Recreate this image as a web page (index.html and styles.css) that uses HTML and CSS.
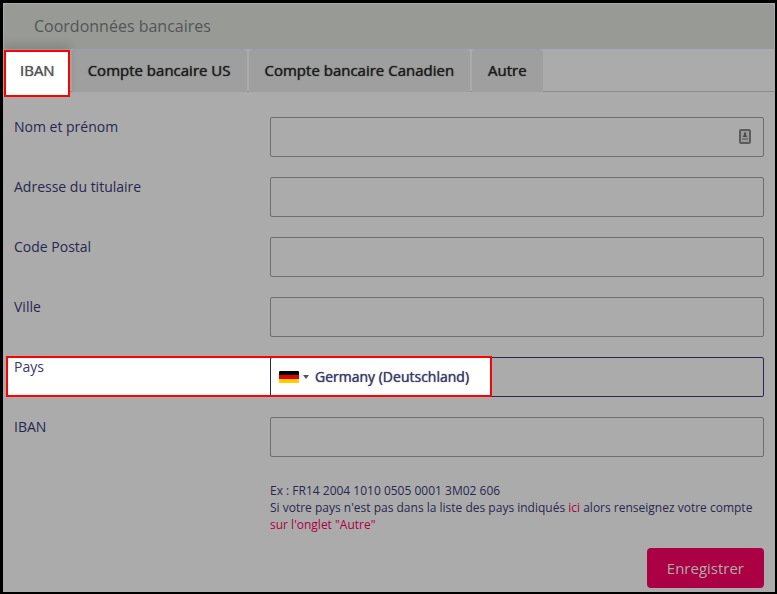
FILE: index.html
```
<!DOCTYPE html>
<html lang="fr">
<head>
  <meta charset="UTF-8" />
  <meta name="viewport" content="width=device-width, initial-scale=1" />
  <title>Coordonnées bancaires</title>
  <link rel="stylesheet" href="styles.css">
</head>
<body>
  <main class="panel">
    <h1 class="panel-title">Coordonnées bancaires</h1>

    <nav class="tabs" role="tablist">
      <button type="button" class="tab active" role="tab" aria-selected="true">IBAN</button>
      <button type="button" class="tab" role="tab" aria-selected="false">Compte bancaire US</button>
      <button type="button" class="tab" role="tab" aria-selected="false">Compte bancaire Canadien</button>
      <button type="button" class="tab" role="tab" aria-selected="false">Autre</button>
    </nav>

    <form class="bank-form">
      <div class="row">
        <label for="name">Nom et prénom</label>
        <div class="field">
          <input type="text" id="name" />
          <svg class="contact-icon" viewBox="0 0 12 16" aria-hidden="true">
            <rect x="1" y="1" width="10" height="13" rx="1" fill="#999" stroke="#5c5c5c" stroke-width="2" />
            <path d="M6 3 L7 4 V6 L8 7 V8 H4 V7 L5 6 V4 Z" fill="#4c4c4c" />
            <rect x="3" y="9" width="6" height="2" fill="#777" />
          </svg>
        </div>
      </div>
      <div class="row">
        <label for="address">Adresse du titulaire</label>
        <div class="field"><input type="text" id="address" /></div>
      </div>
      <div class="row">
        <label for="zip">Code Postal</label>
        <div class="field"><input type="text" id="zip" /></div>
      </div>
      <div class="row">
        <label for="city">Ville</label>
        <div class="field"><input type="text" id="city" /></div>
      </div>
      <div class="row highlighted">
        <label for="country">Pays</label>
        <div class="field">
          <select id="country">
            <option>Germany (Deutschland)</option>
          </select>
          <span class="flag" aria-hidden="true"></span>
          <span class="arrow" aria-hidden="true"></span>
        </div>
      </div>
      <div class="row">
        <label for="iban">IBAN</label>
        <div class="field"><input type="text" id="iban" /></div>
      </div>

      <p class="help">
        Ex : FR14 2004 1010 0505 0001 3M02 606<br>
        Si votre pays n'est pas dans la liste des pays indiqués <a href="#pays">ici</a> alors renseignez votre compte <a href="#autre">sur l'onglet "Autre"</a>
      </p>

      <div class="actions">
        <button type="submit" class="submit">Enregistrer</button>
      </div>
    </form>
  </main>
</body>
</html>
```
FILE: styles.css
```
:root {
  --page: #ababab;
  --text: #292750;
  --text-lit: #3b3968;
  --field-border: #6e6e6e;
  --pink: #ab0043;
  --mark: #ff0000;
}

* {
  box-sizing: border-box;
}

body {
  margin: 0;
  background: #000;
  color: var(--text);
  font-family: "Open Sans", "Noto Sans", sans-serif;
  font-size: 14px;
  line-height: 20px;
}

.panel {
  min-height: calc(100vh - 5px);
  margin: 3px 2px 2px 3px;
  padding: 1px 1px 0;
  background: var(--page);
}

.panel-title {
  margin: 0;
  padding: 11px 30px;
  border-bottom: 1px solid #929ba5;
  border-radius: 3px 3px 0 0;
  background: #979a95;
  color: #555;
  font-size: 16px;
  font-weight: 400;
  line-height: 22px;
}

.tabs {
  display: flex;
  gap: 2px;
  height: 43px;
  border-bottom: 1px solid #8c8c8c;
}

.tab {
  height: 43px;
  padding: 0 16px 2px;
  border: none;
  border-radius: 4px 4px 0 0;
  background: #9f9f9f;
  color: #1c1c1c;
  font: inherit;
  font-size: 15px;
  text-shadow: 0 0 1px currentColor;
  cursor: pointer;
}

.tab.active {
  z-index: 1;
  height: 47px;
  margin-top: 1px;
  padding: 0 13px 8px 14px;
  border: 2px solid var(--mark);
  border-radius: 0;
  background: #fff;
  color: #555;
  box-shadow: 0 -6px 8px rgba(0, 0, 0, 0.12);
}

.bank-form {
  padding: 25px 10px 4px;
}

.row {
  display: grid;
  grid-template-columns: 256px 1fr;
  position: relative;
  margin-bottom: 20px;
}

.field {
  position: relative;
}

.field input,
.field select {
  display: block;
  width: 100%;
  height: 40px;
  padding: 0 10px;
  border: 1px solid var(--field-border);
  border-radius: 2px;
  background: transparent;
  color: inherit;
  font: inherit;
}

.field select {
  padding-left: 44px;
  border-color: var(--text);
  color: var(--text-lit);
  text-shadow: 0 0 1px currentColor;
  appearance: none;
}

.contact-icon {
  position: absolute;
  top: 12px;
  right: 13px;
  width: 12px;
  height: 16px;
}

.highlighted label,
.highlighted .field {
  z-index: 1;
}

.highlighted label {
  color: var(--text-lit);
}

/* white spot under the row, red frame over it */
.highlighted::before,
.highlighted::after {
  content: "";
  position: absolute;
  top: -1px;
  right: 272px;
  bottom: 0;
  left: -8px;
  pointer-events: none;
}

.highlighted::before {
  background: #fff;
}

.highlighted::after {
  z-index: 2;
  border: 2px solid var(--mark);
}

.flag {
  position: absolute;
  top: 14px;
  left: 9px;
  width: 20px;
  height: 12px;
  border-radius: 1px;
  background: linear-gradient(#000 0 4px, #e00000 4px 8px, #ffce00 8px);
  pointer-events: none;
}

.arrow {
  position: absolute;
  top: 18px;
  left: 33px;
  border: 3px solid transparent;
  border-top: 4px solid #555;
  border-bottom: none;
  pointer-events: none;
}

.help {
  margin: 0 0 15px 256px;
  padding-top: 5px;
  font-size: 12px;
  line-height: 17px;
}

.help a {
  color: var(--pink);
  text-decoration: none;
}

.actions {
  display: flex;
  justify-content: flex-end;
}

.submit {
  height: 40px;
  padding: 0 20px;
  border: none;
  border-radius: 4px;
  background: var(--pink);
  color: #ababab;
  font: inherit;
  font-size: 15px;
  cursor: pointer;
}

@media (max-width: 600px) {
  .row {
    grid-template-columns: 1fr;
  }
  .highlighted::before,
  .highlighted::after {
    right: -8px;
  }
  .help {
    margin-left: 0;
  }
}
```
